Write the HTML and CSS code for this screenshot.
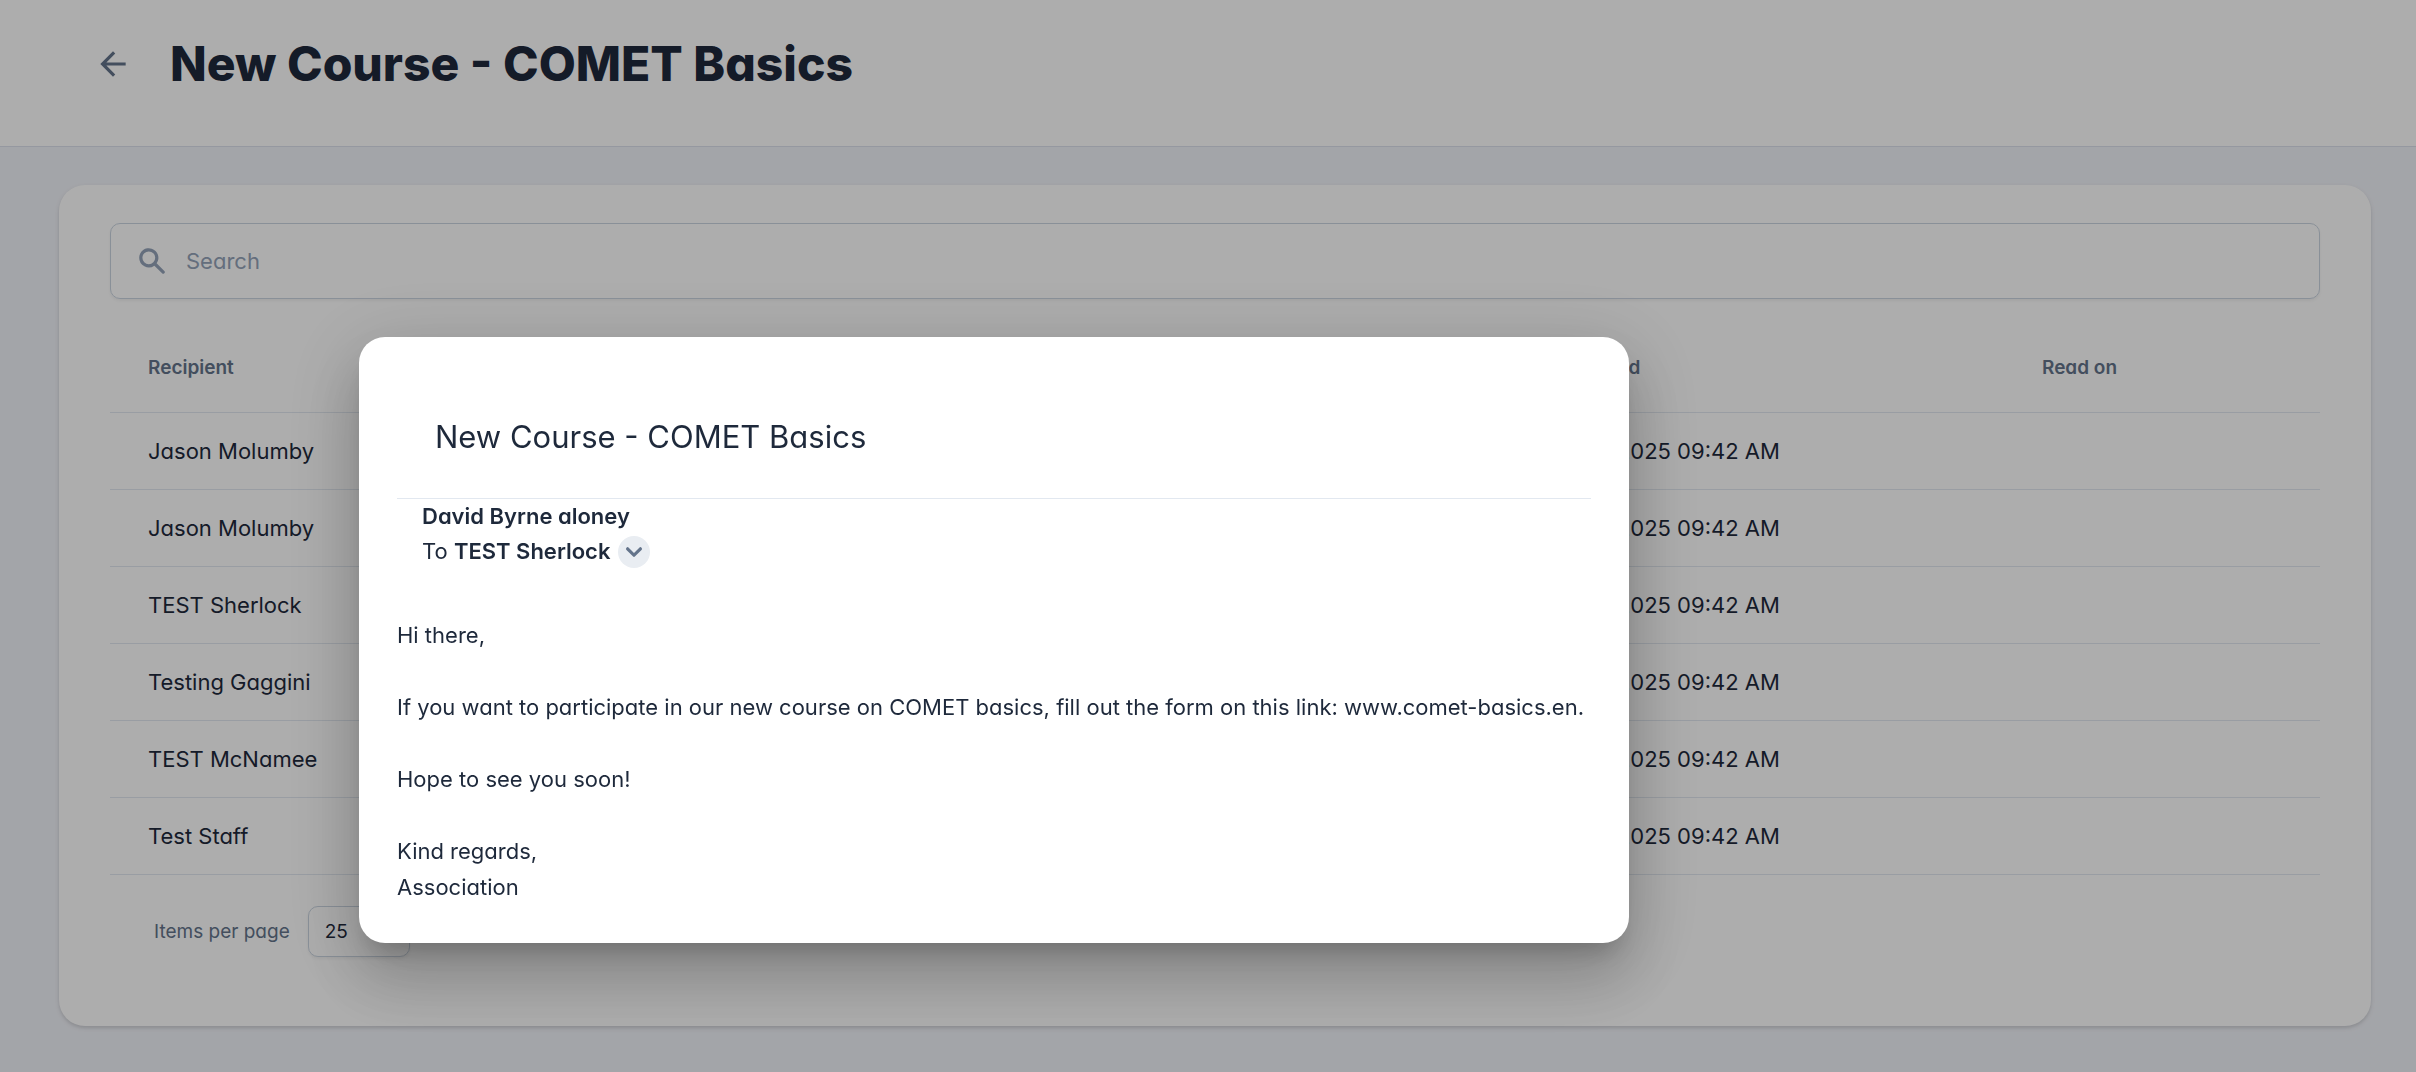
FILE: index.html
```html
<!DOCTYPE html>
<html lang="en">

<head>
    <meta charset="UTF-8">
    <meta name="viewport" content="width=device-width, initial-scale=1.0">
    <title>New Course - COMET Basics</title>
    <link rel="stylesheet" href="styles.css">
</head>

<body>

    <header class="page-header">
        <a class="back-link" href="#" aria-label="Back">
            <svg viewBox="0 0 24 24" fill="currentColor">
                <path d="M20 11H7.83l5.59-5.59L12 4l-8 8 8 8 1.41-1.41L7.83 13H20v-2z" />
            </svg>
        </a>
        <h1>New Course - COMET Basics</h1>
    </header>

    <main class="content">
        <section class="card">
            <label class="search-box">
                <svg viewBox="0 0 20 20" fill="currentColor">
                    <path fill-rule="evenodd" clip-rule="evenodd" d="M8 4a4 4 0 100 8 4 4 0 000-8zM2 8a6 6 0 1110.89 3.476l4.817 4.817a1 1 0 01-1.414 1.414l-4.816-4.816A6 6 0 012 8z" />
                </svg>
                <input type="text" placeholder="Search" aria-label="Search">
            </label>

            <table class="recipients">
                <thead>
                    <tr>
                        <th class="col-recipient">Recipient</th>
                        <th class="col-received">Received</th>
                        <th class="col-read">Read on</th>
                    </tr>
                </thead>
                <tbody>
                    <tr><td>Jason Molumby</td><td>21/01/2025 09:42 AM</td><td></td></tr>
                    <tr><td>Jason Molumby</td><td>21/01/2025 09:42 AM</td><td></td></tr>
                    <tr><td>TEST Sherlock</td><td>21/01/2025 09:42 AM</td><td></td></tr>
                    <tr><td>Testing Gaggini</td><td>21/01/2025 09:42 AM</td><td></td></tr>
                    <tr><td>TEST McNamee</td><td>21/01/2025 09:42 AM</td><td></td></tr>
                    <tr><td>Test Staff</td><td>21/01/2025 09:42 AM</td><td></td></tr>
                </tbody>
            </table>

            <div class="paginator">
                <label for="pageSize">Items per page</label>
                <select id="pageSize">
                    <option>10</option>
                    <option selected>25</option>
                    <option>50</option>
                </select>
            </div>
        </section>
    </main>

    <div class="backdrop">
        <div class="dialog" role="dialog" aria-labelledby="dialogTitle">
            <h2 id="dialogTitle">New Course - COMET Basics</h2>
            <div class="people">
                <div class="sender">David Byrne aloney</div>
                <div class="receiver">
                    <span>To <b>TEST Sherlock</b></span>
                    <button class="details-button" aria-label="Show details">
                        <svg viewBox="0 0 20 20" fill="currentColor">
                            <path fill-rule="evenodd" clip-rule="evenodd" d="M5.293 7.293a1 1 0 011.414 0L10 10.586l3.293-3.293a1 1 0 111.414 1.414l-4 4a1 1 0 01-1.414 0l-4-4a1 1 0 010-1.414z" />
                        </svg>
                    </button>
                </div>
            </div>
            <div class="message">
                <p>Hi there,</p>
                <p>If you want to participate in our new course on COMET basics, fill out the form on this link: www.comet-basics.en.</p>
                <p>Hope to see you soon!</p>
                <p>Kind regards,<br>Association</p>
            </div>
        </div>
    </div>

</body>

</html>
```

FILE: styles.css
```css
* {
    box-sizing: border-box;
}

body {
    margin: 0;
    min-height: 100vh;
    background-color: #f1f3f9;
    color: #1e293b;
    font-family: Inter, "Open Sans", sans-serif;
    font-feature-settings: "cv11";
    font-size: 22px;
    line-height: 36px;
}

/* Header */
.page-header {
    display: flex;
    align-items: center;
    gap: 38px;
    padding: 32px 94px 50px;
    background-color: #fff;
    border-bottom: 1px solid #dce1ec;
}

.back-link {
    display: flex;
    color: #64748b;
}

.back-link svg {
    width: 38px;
    height: 38px;
}

h1 {
    margin: 0;
    font-size: 48px;
    font-weight: 800;
    line-height: 64px;
}

/* Card */
.content {
    padding: 38px 45px 45px 59px;
}

.card {
    padding: 38px 51px;
    background-color: #fff;
    border-radius: 26px;
    box-shadow: 0 2px 5px rgba(0, 0, 0, 0.1), 0 2px 3px rgba(0, 0, 0, 0.06);
}

.search-box {
    display: flex;
    align-items: center;
    gap: 18px;
    height: 76px;
    padding: 0 25px;
    border: 1px solid #cbd5e1;
    border-radius: 10px;
    box-shadow: 0 2px 3px rgba(0, 0, 0, 0.05);
    color: #94a3b8;
}

.search-box svg {
    width: 32px;
    height: 32px;
}

.search-box input {
    flex: 1;
    padding: 0;
    border: none;
    outline: none;
    background: none;
    color: #1e293b;
    font: inherit;
    font-feature-settings: inherit;
}

.search-box input::placeholder {
    color: #94a3b8;
    opacity: 1;
}

/* Table */
.recipients {
    width: 100%;
    margin-top: 24px;
    border-collapse: separate;
    border-spacing: 0;
    table-layout: fixed;
}

.recipients th,
.recipients td {
    height: 77px;
    padding: 0 0 0 38px;
    border-bottom: 1px solid #e2e8f0;
    text-align: left;
}

.recipients th {
    height: 90px;
    color: #64748b;
    font-size: 19px;
    font-weight: 600;
}

.col-received {
    width: 22%;
}

.col-read {
    width: 14.3%;
}

/* Paginator */
.paginator {
    display: flex;
    align-items: center;
    gap: 18px;
    height: 113px;
    padding-left: 44px;
    color: #64748b;
    font-size: 19px;
}

.paginator select {
    appearance: none;
    width: 102px;
    height: 51px;
    padding: 0 16px;
    border: 1px solid #cbd5e1;
    border-radius: 10px;
    background-color: #fff;
    box-shadow: 0 2px 3px rgba(0, 0, 0, 0.05);
    color: #1e293b;
    font: inherit;
    font-feature-settings: inherit;
}

/* Message dialog */
.backdrop {
    position: fixed;
    inset: 0;
    background-color: rgba(0, 0, 0, 0.32);
}

.dialog {
    position: absolute;
    top: 337px;
    left: 359px;
    min-width: 1270px;
    padding: 38px;
    background-color: #fff;
    border-radius: 26px;
    box-shadow: 0 18px 24px -11px rgba(0, 0, 0, 0.2), 0 38px 61px 5px rgba(0, 0, 0, 0.14), 0 14px 74px 13px rgba(0, 0, 0, 0.12);
}

.dialog h2 {
    margin: 0;
    padding: 38px;
    border-bottom: 1px solid #e2e8f0;
    font-size: 31px;
    font-weight: 400;
    line-height: 47px;
}

.people {
    padding: 0 25px;
    line-height: 35px;
}

.sender,
.receiver b {
    font-weight: 600;
}

.receiver {
    display: flex;
    align-items: center;
    gap: 8px;
}

.details-button {
    display: flex;
    align-items: center;
    justify-content: center;
    width: 32px;
    height: 32px;
    padding: 0;
    border: none;
    border-radius: 50%;
    background-color: #e9edf2;
    color: #64748b;
    cursor: pointer;
}

.details-button svg {
    width: 32px;
    height: 32px;
}

.message {
    margin-top: 48px;
}

.message p {
    margin: 0 0 36px;
}

.message p:last-child {
    margin-bottom: 0;
}
```
